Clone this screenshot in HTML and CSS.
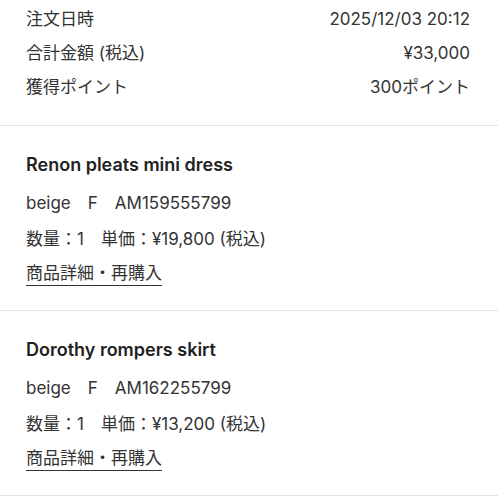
FILE: index.html
```html
<!DOCTYPE html>
<html lang="ja">
<head>
    <meta charset="UTF-8">
    <meta name="viewport" content="width=device-width, initial-scale=1.0">
    <title>注文詳細</title>
    <link rel="stylesheet" href="styles.css">
</head>
<body>
    <div class="order">
        <div class="summary">
            <div class="row">
                <span>注文日時</span>
                <span>2025/12/03 20:12</span>
            </div>
            <div class="row">
                <span>合計金額 (税込)</span>
                <span>¥33,000</span>
            </div>
            <div class="row">
                <span>獲得ポイント</span>
                <span>300ポイント</span>
            </div>
        </div>

        <div class="item">
            <h3 class="item-name">Renon pleats mini dress</h3>
            <p class="item-spec">beige　F　AM159555799</p>
            <p class="item-price">数量：1　単価：¥19,800 (税込)</p>
            <a class="item-link" href="#">商品詳細・再購入</a>
        </div>

        <div class="item">
            <h3 class="item-name">Dorothy rompers skirt</h3>
            <p class="item-spec">beige　F　AM162255799</p>
            <p class="item-price">数量：1　単価：¥13,200 (税込)</p>
            <a class="item-link" href="#">商品詳細・再購入</a>
        </div>
    </div>
</body>
</html>
```

FILE: styles.css
```css
body {
    font-family: "Inter", "Noto Sans CJK JP", sans-serif;
    font-size: 17px;
    background-color: #fff;
    color: #333;
    margin: 0;
    padding: 0;
}
.order {
    display: flex;
    flex-direction: column;
}
.summary {
    display: flex;
    flex-direction: column;
    gap: 10px;
    padding: 7px 28px 26px 26px;
    border-bottom: 1px solid #e4e4e4;
}
.row {
    display: flex;
    justify-content: space-between;
    line-height: 24px;
}
.item {
    display: flex;
    flex-direction: column;
    align-items: flex-start;
    padding: 27px 28px 24px 26px;
    border-bottom: 1px solid #e4e4e4;
}
.item-name {
    margin: 0 0 14px;
    font-size: 18px;
    font-weight: 600;
    line-height: 24px;
    color: #222;
}
.item-spec {
    margin: 0 0 12px;
    line-height: 24px;
}
.item-price {
    margin: 0 0 10px;
    line-height: 24px;
}
.item-link {
    color: #333;
    text-decoration: none;
    line-height: 24px;
    border-bottom: 1px solid #333;
}
```
